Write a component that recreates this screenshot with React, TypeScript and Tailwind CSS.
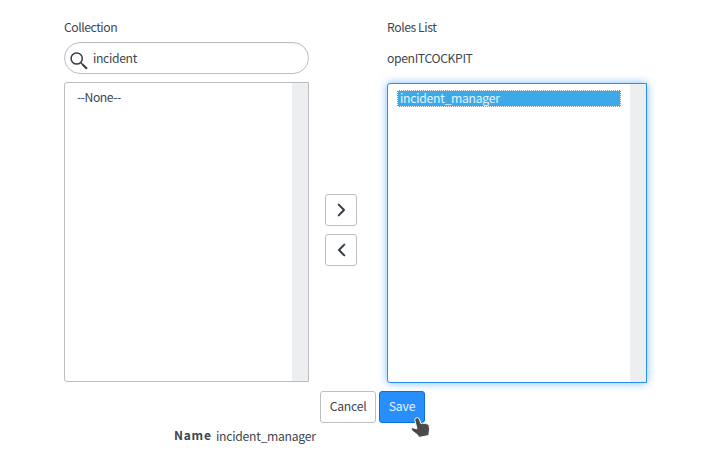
import React from "react";

function MoveButton({ label, path }: { label: string; path: string }) {
  return (
    <button aria-label={label} className="flex size-8 items-center justify-center rounded-[3px] border border-[#bcbec3] bg-white">
      <svg width="30" height="30" viewBox="0 0 30 30" fill="none" stroke="#343d47" strokeWidth="2" strokeLinecap="round" strokeLinejoin="round">
        <path d={path} />
      </svg>
    </button>
  );
}

export default function App() {
  return (
    <div className="h-[463px] w-[716px] overflow-hidden bg-white pt-[19px] pl-16 font-['Noto_Sans_CJK_SC','Noto_Sans',sans-serif] text-[12.2px] leading-4 text-[#3d4650]">
      <div className="flex h-[364px] items-start">
        <section className="w-[245px]">
          <div className="h-4 tracking-[-0.45px]">Collection</div>
          <div className="mt-[7px] flex h-8 items-center rounded-full border border-[#bcbec3] bg-white pl-[5px] shadow-[inset_0_1px_1px_rgba(0,0,0,0.04)]">
            <svg className="mt-[5px]" width="18" height="18" viewBox="0 0 18 18" fill="none" stroke="#343d47">
              <circle cx="6.7" cy="6.5" r="5.6" strokeWidth="1.5" />
              <path d="M10.6 10.5 L12.6 12.5" strokeWidth="1.3" />
              <path d="M12.3 12.2 L17 16.8" strokeWidth="2" />
            </svg>
            <span className="ml-[5px] tracking-[-0.35px]">incident</span>
          </div>
          <div className="mt-2 flex h-[300px] justify-between rounded-l-[3px] border border-[#bcbec3] bg-white">
            <span className="mt-1.5 ml-3 tracking-[-0.45px]">--None--</span>
            <div className="w-4 bg-[#edeef0]" />
          </div>
        </section>

        <div className="mt-[175px] ml-4 flex w-8 flex-col gap-2">
          <MoveButton label="Add" path="M12.7 9.6 L18 15 L12.7 20.4" />
          <MoveButton label="Remove" path="M18.3 9.6 L13 15 L18.3 20.4" />
        </div>

        <section className="ml-[30px] w-[260px]">
          <div className="h-4 tracking-[-0.42px]">Roles List</div>
          <div className="mt-[15px] h-4 tracking-[-0.37px]">openITCOCKPIT</div>
          <div className="mt-[17px] flex h-[300px] justify-between rounded-l-[3px] border border-[#278efc] bg-white shadow-[0_0_8px_rgba(39,142,252,0.6)]">
            <div className="mt-1.5 ml-[9px] h-[17px] w-[224px] border border-dotted border-white bg-[#3da9e9] pl-[2px] leading-[14px] tracking-[-0.28px] text-[#e3f4fd]">
              incident_manager
            </div>
            <div className="w-4 bg-[#edeef0]" />
          </div>
        </section>
      </div>

      <div className="mt-2 ml-64 flex gap-[3px]">
        <button className="h-8 w-14 rounded-[3px] border border-[#bcbec3] bg-white pb-[2px] tracking-[-0.25px]">Cancel</button>
        <div className="relative">
          <button className="h-8 w-[46px] rounded-[3px] border border-[#0870d8] bg-[#278efc] pb-[2px] tracking-[-0.15px] text-[#e8f4ff]">Save</button>
          <svg className="absolute top-[25px] left-[31px]" width="21" height="23" viewBox="0 0 21 23">
            <path
              d="M5.5 2.2 Q7.3.8 9 2.5 L11 7.7 Q12.2 6.5 13.7 7.6 Q15 6.5 16.5 7.8 Q18.4 7.5 19 9.4 L19.6 13 L18.8 19.5 L9 21.4 L7.4 18.8 L2 14.8 Q.5 12.4 2.5 11.7 L7 12.8 L4.8 4.2 Q4.8 3 5.5 2.2Z"
              fill="#4a4a4a"
              stroke="#ffffff"
              strokeWidth="1"
              strokeLinejoin="round"
            />
          </svg>
        </div>
      </div>

      <div className="mt-[5px] ml-[110px] flex h-4 gap-[6px]">
        <span className="-mt-px w-9 text-[12px] font-bold tracking-[0.75px]">Name</span>
        <span className="tracking-[-0.28px]">incident_manager</span>
      </div>
    </div>
  );
}
